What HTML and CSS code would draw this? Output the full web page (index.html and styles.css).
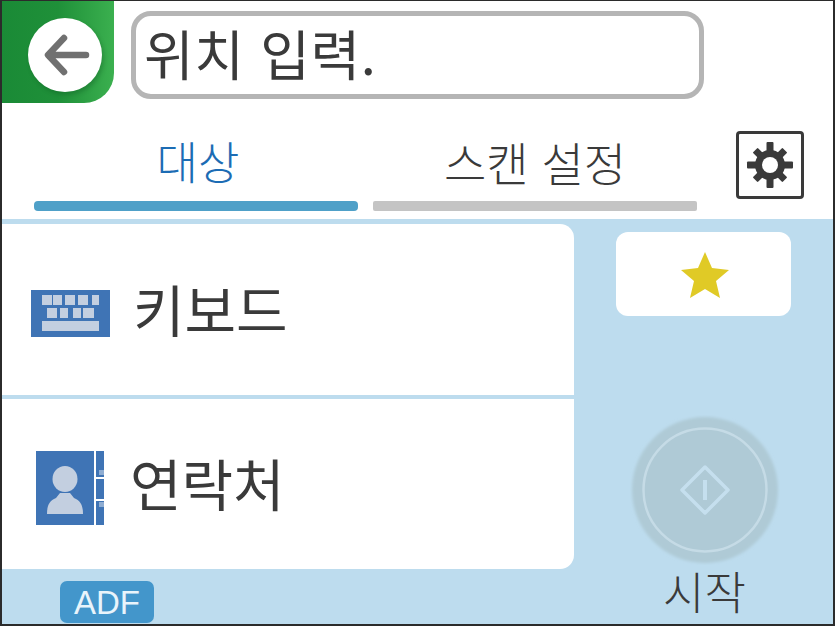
FILE: index.html
```html
<!DOCTYPE html>
<html lang="ko">
<head>
<meta charset="utf-8">
<title>위치 입력</title>
<link rel="stylesheet" href="styles.css">
</head>
<body>
<div class="screen">
  <header class="top">
    <div class="back">
      <div class="back-circle">
        <svg width="60" height="60" viewBox="0 0 60 60"><path d="M51 30H14M29 13L13 30L29 47" fill="none" stroke="#707070" stroke-width="6.5" stroke-linecap="round" stroke-linejoin="round"/></svg>
      </div>
    </div>
    <div class="field">위치 입력.</div>
  </header>
  <nav class="tabs">
    <div class="tab active"><span class="tab-label">대상</span><span class="tab-bar"></span></div>
    <div class="tab"><span class="tab-label">스캔 설정</span><span class="tab-bar"></span></div>
    <div class="gear">
      <svg width="48" height="48" viewBox="0 0 48 48"><g fill="#3a3a3a"><circle cx="24" cy="24" r="15"/><rect x="20.5" y="1" width="7" height="46" rx="1"/><rect x="20.5" y="3" width="7" height="42" rx="1" transform="rotate(45 24 24)"/><rect x="20.5" y="1" width="7" height="46" rx="1" transform="rotate(90 24 24)"/><rect x="20.5" y="3" width="7" height="42" rx="1" transform="rotate(135 24 24)"/></g><circle cx="24" cy="24" r="8" fill="#fff"/></svg>
    </div>
  </nav>
  <main class="body">
    <section class="left">
      <div class="list">
        <div class="row row-first">
          <svg class="ico-kb" width="79" height="47" viewBox="0 0 79 47"><rect width="79" height="47" fill="#3f74b5"/><g fill="#c3cfe0"><rect x="11" y="5" width="10" height="10"/><rect x="22" y="5" width="9" height="10"/><rect x="34" y="5" width="10" height="10"/><rect x="47" y="5" width="10" height="10"/><rect x="61" y="5" width="7" height="10"/><rect x="16" y="18" width="10" height="10"/><rect x="29" y="18" width="8" height="10"/><rect x="42" y="18" width="8" height="10"/><rect x="52" y="18" width="11" height="10"/><rect x="11" y="31" width="57" height="10"/></g></svg>
          <span class="row-label">키보드</span>
        </div>
        <div class="row row-second">
          <svg class="ico-book" width="69" height="74" viewBox="0 0 69 74"><rect width="58" height="74" fill="#3f74b5"/><rect x="60" width="8" height="74" fill="#3f74b5"/><rect x="60" y="26" width="8" height="2" fill="#fff"/><rect x="60" y="48" width="8" height="2" fill="#fff"/><rect x="63" y="19" width="5" height="5" fill="#8fadd2"/><rect x="63" y="51" width="5" height="5" fill="#8fadd2"/><g fill="#c3cfe0"><ellipse cx="29" cy="28" rx="12.5" ry="13"/><path d="M11 63c0-8 2-13 9-16l4-5h10l4 5c7 3 9 8 9 16z"/></g></svg>
          <span class="row-label">연락처</span>
        </div>
      </div>
      <div class="adf-row"><span class="adf">ADF</span></div>
    </section>
    <aside class="right">
      <div class="star-card">
        <svg class="star" width="48" height="46" viewBox="0 0 48 46"><path d="M24 0l7 16 17 2-13 11 4 17-15-9-15 9 4-17L0 18l17-2z" fill="#e0ca26"/></svg>
      </div>
      <div class="start">
        <svg width="150" height="150" viewBox="0 0 150 150"><defs><filter id="b"><feGaussianBlur stdDeviation="1.5"/></filter></defs><circle cx="75" cy="75" r="73" fill="#afcad6" filter="url(#b)"/><circle cx="75" cy="75" r="61.5" fill="none" stroke="#c5dbe6" stroke-width="2.5"/><path d="M75 52L98 75L75 98L52 75Z" fill="none" stroke="#c5dfee" stroke-width="3.5" stroke-linejoin="round"/><path d="M75 65V85" stroke="#c5dfee" stroke-width="4"/></svg>
        <span class="start-label">시작</span>
      </div>
    </aside>
  </main>
</div>
</body>
</html>
```
FILE: styles.css
```css
html, body { margin: 0; padding: 0; }
body { width: 835px; height: 626px; overflow: hidden; background: #fff; font-family: "Noto Sans CJK KR", "Noto Sans", sans-serif; }
.screen { box-sizing: border-box; width: 835px; height: 626px; border-style: solid; border-color: #2b2b2b; border-width: 1px 2px 2px 2px; display: flex; flex-direction: column; background: #fff; color: #3a3a3a; }
.top { height: 102px; display: flex; align-items: flex-start; flex: none; }
.back { width: 112px; height: 102px; flex: none; padding: 17px 0 0 26px; box-sizing: border-box; border-bottom-right-radius: 30px; background: linear-gradient(90deg, #1a8a36 0%, #1f9039 50%, #3bb04f 100%); }
.back-circle { width: 74px; height: 74px; border-radius: 50%; background: #fff; display: flex; align-items: center; justify-content: center; box-shadow: 2px 3px 4px rgba(0,60,20,.25); }
.field { box-sizing: border-box; width: 573px; height: 88px; margin: 10px 0 0 17px; border: 5px solid #b5b5b5; border-radius: 20px; padding-left: 8px; font-size: 54px; letter-spacing: 0.6px; line-height: 74px; white-space: nowrap; }
.tabs { height: 116px; flex: none; display: flex; padding-left: 32px; }
.tab { width: 324px; margin-right: 15px; display: flex; flex-direction: column; align-items: center; }
.tab + .tab { margin-right: 0; }
.tab-label { font-size: 46px; line-height: 56px; height: 56px; margin-top: 30px; font-weight: 300; }
.tab-bar { width: 100%; height: 10px; margin-top: 12px; background: #c4c4c4; border-radius: 2px; }
.active .tab-label { color: #1c6cb4; font-size: 45px; padding-left: 4px; }
.active .tab-bar { background: #4fa0c8; border-radius: 4px; }
.gear { box-sizing: border-box; width: 68px; height: 68px; margin: 28px 0 0 39px; border: 3px solid #3a3a3a; border-radius: 4px; display: flex; align-items: center; justify-content: center; }
.body { flex: 1; min-height: 0; display: flex; background: #bddcee; }
.left { width: 572px; flex: none; display: flex; flex-direction: column; padding-top: 5px; }
.list { background: #bddcee; display: flex; flex-direction: column; gap: 4px; }
.row { background: #fff; display: flex; align-items: center; }
.row-first { height: 171px; border-top-right-radius: 14px; padding-left: 29px; gap: 23px; }
.row-second { height: 170px; border-bottom-right-radius: 14px; padding-left: 34px; gap: 25px; }
.row-label { font-size: 56px; line-height: 70px; }
.row-first .row-label { margin-top: -3px; }
.row-second .row-label { margin-top: -5px; }
.ico-kb { margin-top: 7px; }
.ico-book { margin-top: 8px; }
.adf-row { padding: 12px 0 0 58px; }
.adf { display: block; width: 94px; height: 42px; border-radius: 7px; background: #4396cb; color: #e9f4fb; font-family: "Liberation Sans", sans-serif; font-size: 33px; line-height: 44px; text-align: center; }
.right { flex: 1; display: flex; flex-direction: column; align-items: center; padding: 13px 0 0 0; }
.star-card { width: 175px; height: 84px; border-radius: 12px; background: #fff; display: flex; align-items: center; justify-content: center; }
.star { margin: 2px 0 0 2px; }
.start { margin-top: 99px; margin-left: 2px; display: flex; flex-direction: column; align-items: center; }
.start-label { font-size: 45px; line-height: 50px; margin-top: 1px; font-weight: 300; }
```
